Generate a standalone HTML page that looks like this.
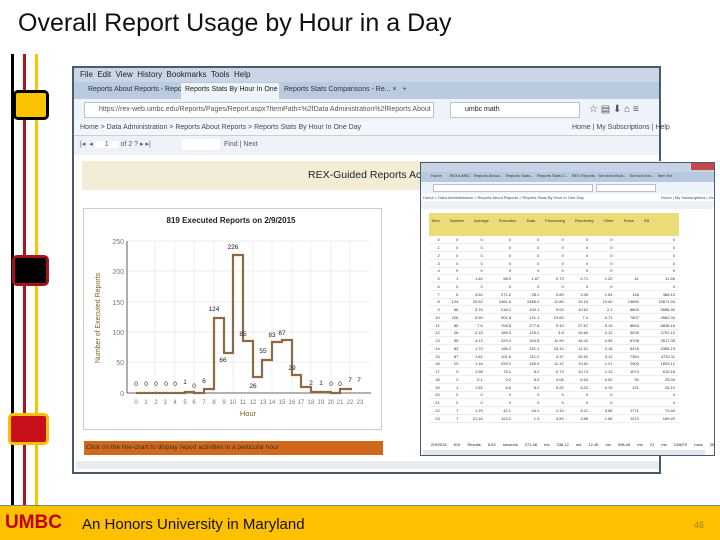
<!DOCTYPE html>
<html><head><meta charset="utf-8"><style>
*{margin:0;padding:0;box-sizing:border-box}
body{width:720px;height:540px;position:relative;overflow:hidden;background:#fff;font-family:"Liberation Sans",sans-serif}
.a{position:absolute}
.t{white-space:nowrap}
table{border-collapse:collapse;font-size:4px;color:#333}
td{height:7.75px;text-align:right;padding-right:4px;border-bottom:1px solid #eee}
</style></head><body>
<div class="a t" style="left:18px;top:9px;font-size:25px;color:#111">Overall Report Usage by Hour in a Day</div>
<div class="a" style="left:11px;top:54px;width:3px;height:452px;background:#000"></div>
<div class="a" style="left:23px;top:54px;width:3px;height:452px;background:#b01218"></div>
<div class="a" style="left:35px;top:54px;width:3px;height:452px;background:#f5c400"></div>
<div class="a" style="left:13px;top:90px;width:36px;height:30px;background:#fbc300;border:3px solid #000;border-radius:5px"></div>
<div class="a" style="left:12px;top:255px;width:37px;height:31px;background:#000;border:3px solid #a0141a;border-radius:5px"></div>
<div class="a" style="left:8px;top:413px;width:41px;height:32px;background:#c8101a;border:3px solid #f8c000;border-radius:5px"></div>
<div class="a" style="left:72px;top:66px;width:589px;height:408px;background:#fff;border:2px solid #4a5a70">
 <div class="a" style="left:0;top:0;width:585px;height:14px;background:#c9d6e6"></div>
 <div class="a t" style="left:6px;top:2px;font-size:8px;color:#222">File&nbsp; Edit&nbsp; View&nbsp; History&nbsp; Bookmarks&nbsp; Tools&nbsp; Help</div>
 <div class="a" style="left:0;top:14px;width:585px;height:17px;background:#b9cbe0"></div>
 <div class="a t" style="left:14px;top:18px;font-size:7px;color:#333">Reports About Reports - Repor... ×</div>
 <div class="a t" style="left:107px;top:15px;width:98px;height:16px;background:#eef3f9;font-size:7px;padding:3px 4px;color:#222;overflow:hidden">Reports Stats By Hour In One D... ×</div>
 <div class="a t" style="left:210px;top:18px;font-size:7px;color:#333">Reports Stats Comparisons - Re... ×  &nbsp; +</div>
 <div class="a" style="left:0;top:31px;width:585px;height:22px;background:#eef3f9"></div>
 <div class="a t" style="left:10px;top:34px;width:350px;height:16px;background:#fff;border:1px solid #b8c4d2;font-size:7px;padding:3px 14px;color:#555;overflow:hidden">https://rex-web.umbc.edu/Reports/Pages/Report.aspx?ItemPath=%2fData Administration%2fReports About Reports%2fReports</div>
 <div class="a t" style="left:376px;top:34px;width:130px;height:16px;background:#fff;border:1px solid #b8c4d2;font-size:7px;padding:3px 14px;color:#222">umbc math</div>
 <div class="a t" style="left:515px;top:36px;font-size:10px;color:#555">☆ ▤ ⬇ ⌂ ≡</div>
 <div class="a" style="left:0;top:53px;width:585px;height:14px;background:#f3f6fa"></div>
 <div class="a t" style="left:6px;top:56px;font-size:7px;color:#445">Home &gt; Data Administration &gt; Reports About Reports &gt; Reports Stats By Hour In One Day</div>
 <div class="a t" style="left:498px;top:56px;font-size:7px;color:#445">Home | My Subscriptions | Help</div>
 <div class="a" style="left:0;top:67px;width:585px;height:20px;background:#eef2f7;border-top:1px solid #ccd"></div>
 <div class="a t" style="left:6px;top:72px;font-size:7px;color:#557">|◂ &nbsp;◂ <span style="background:#fff;padding:0 10px">1</span> of 2 ? ▸ ▸|</div>
 <div class="a" style="left:108px;top:71px;width:38px;height:11px;background:#fff"></div>
 <div class="a t" style="left:150px;top:73px;font-size:7px;color:#557">Find | Next</div>
 <div class="a" style="left:8px;top:93px;width:580px;height:29px;background:#f3ecd6"></div>
 <div class="a t" style="left:234px;top:101px;font-size:10.5px;color:#222">REX-Guided Reports Activiti</div>
 <div class="a" style="left:9px;top:140px;width:299px;height:222px;border:1px solid #ccc;background:#fff"></div>
 <div class="a" style="left:10px;top:373px;width:299px;height:14px;background:#d0691e"></div>
 <div class="a t" style="left:12px;top:376px;font-size:6.5px;color:#333">Click on the line-chart to display report activities in a particular hour</div>
 <div class="a" style="left:2px;top:393px;width:583px;height:8px;background:#e8ecf0"></div>
</div>
<svg class="a" style="left:0;top:0" width="720" height="540">
 <text x="231" y="223" font-size="8" font-weight="bold" text-anchor="middle" fill="#222" font-family="Liberation Sans">819 Executed Reports on 2/9/2015</text>
 <g stroke="#ddd" stroke-width="0.6">
  <line x1="127" y1="241" x2="370" y2="241"/><line x1="127" y1="271" x2="370" y2="271"/><line x1="127" y1="302" x2="370" y2="302"/><line x1="127" y1="332" x2="370" y2="332"/><line x1="127" y1="362" x2="370" y2="362"/>
 </g>
 <g stroke="#e4e4e4" stroke-width="0.6">
  <line x1="155" y1="241" x2="155" y2="393"/><line x1="175" y1="241" x2="175" y2="393"/><line x1="194" y1="241" x2="194" y2="393"/><line x1="214" y1="241" x2="214" y2="393"/><line x1="233" y1="241" x2="233" y2="393"/><line x1="253" y1="241" x2="253" y2="393"/><line x1="272" y1="241" x2="272" y2="393"/><line x1="292" y1="241" x2="292" y2="393"/><line x1="311" y1="241" x2="311" y2="393"/><line x1="331" y1="241" x2="331" y2="393"/><line x1="350" y1="241" x2="350" y2="393"/>
 </g>
 <line x1="127" y1="241" x2="127" y2="393" stroke="#333" stroke-width="0.8"/>
 <line x1="127" y1="393" x2="371" y2="393" stroke="#333" stroke-width="0.8"/>
 <g font-size="7" fill="#777" text-anchor="end" font-family="Liberation Sans">
  <text x="124" y="244">250</text><text x="124" y="274">200</text><text x="124" y="305">150</text><text x="124" y="335">100</text><text x="124" y="365">50</text><text x="124" y="396">0</text>
 </g>
 <text transform="translate(100,318) rotate(-90)" font-size="7" fill="#7a6320" text-anchor="middle" font-family="Liberation Sans">Number of Executed Reports</text>
 <text x="248" y="416" font-size="7.5" fill="#7a6320" text-anchor="middle" font-family="Liberation Sans">Hour</text>
 <path fill="none" stroke="#8b6a45" stroke-width="2.2" d="M136 393 H185 V392 H194 V393 H204 V389 H214 V318 H224 V353 H233 V255 H243 V341 H253 V377 H262 V360 H272 V342 H282 V340 H292 V375 H301 V387 H311 V392 H321 V392 H331 V393 H340 V389 H352"/>
 <g font-size="6.5" fill="#222" text-anchor="middle" font-family="Liberation Sans">
  <text x="136" y="386">0</text><text x="146" y="386">0</text><text x="156" y="386">0</text><text x="166" y="386">0</text><text x="175" y="386">0</text><text x="185" y="384">1</text><text x="194" y="388">0</text><text x="204" y="383">6</text><text x="214" y="311">124</text><text x="223" y="362">66</text><text x="233" y="249">226</text><text x="243" y="336">85</text><text x="253" y="388">26</text><text x="263" y="353">55</text><text x="272" y="337">83</text><text x="282" y="335">87</text><text x="292" y="370">29</text><text x="311" y="385">2</text><text x="321" y="385">1</text><text x="331" y="386">0</text><text x="340" y="386">0</text><text x="350" y="382">7</text><text x="359" y="382">7</text>
 </g>
 <g font-size="6" fill="#777" text-anchor="middle" font-family="Liberation Sans">
  <text x="136" y="404">0</text><text x="146" y="404">1</text><text x="156" y="404">2</text><text x="165" y="404">3</text><text x="175" y="404">4</text><text x="185" y="404">5</text><text x="194" y="404">6</text><text x="204" y="404">7</text><text x="214" y="404">8</text><text x="224" y="404">9</text><text x="233" y="404">10</text><text x="243" y="404">11</text><text x="253" y="404">12</text><text x="263" y="404">13</text><text x="272" y="404">14</text><text x="282" y="404">15</text><text x="292" y="404">16</text><text x="301" y="404">17</text><text x="311" y="404">18</text><text x="321" y="404">19</text><text x="331" y="404">20</text><text x="340" y="404">21</text><text x="350" y="404">22</text><text x="360" y="404">23</text>
 </g>
</svg>
<div class="a" style="left:420px;top:162px;width:295px;height:294px;background:#fff;border:1px solid #4a5a70;overflow:hidden">
 <div class="a" style="left:0;top:0;width:295px;height:9px;background:#c5d3e4"></div>
 <div class="a" style="left:270px;top:0;width:25px;height:7px;background:#c8484a"></div>
 <div class="a" style="left:0;top:9px;width:295px;height:10px;background:#b7c9df"></div>
 <div class="a t" style="left:10px;top:10px;font-size:4px;color:#333">Home &nbsp; &nbsp; &nbsp; REX/UMBC &nbsp; Reports About... &nbsp; Reports Stats... &nbsp; Reports Stats C... &nbsp; REX Reports &nbsp; Services/Stud... &nbsp; Service Ann... &nbsp; Item Sel</div>
 <div class="a" style="left:0;top:19px;width:295px;height:12px;background:#eef3f9"></div>
 <div class="a" style="left:12px;top:21px;width:160px;height:8px;background:#fff;border:1px solid #bbc"></div>
 <div class="a" style="left:175px;top:21px;width:60px;height:8px;background:#fff;border:1px solid #bbc"></div>
 <div class="a t" style="left:2px;top:32px;font-size:4px;color:#445">Home &gt; Data Administration &gt; Reports About Reports &gt; Reports Stats By Hour In One Day</div>
 <div class="a t" style="left:240px;top:32px;font-size:4px;color:#445">Home | My Subscriptions | Help</div>
 <div class="a" style="left:0;top:38px;width:295px;height:8px;background:#eef2f7"></div>
 <div class="a" style="left:8px;top:50px;width:250px;height:23px;background:#ecdc78"></div>
 <div class="a t" style="left:10px;top:55px;font-size:4px;color:#333;word-spacing:9px">Time Number Average Execution Data Processing Rendering Other Rows KB</div>
 <div class="a" style="left:8px;top:73px;width:250px">
 <table style="width:250px">
 <tr><td>0</td><td>0</td><td>0</td><td>0</td><td>0</td><td>0</td><td>0</td><td>0</td><td></td><td>0</td></tr>
 <tr><td>1</td><td>0</td><td>0</td><td>0</td><td>0</td><td>0</td><td>0</td><td>0</td><td></td><td>0</td></tr>
 <tr><td>2</td><td>0</td><td>0</td><td>0</td><td>0</td><td>0</td><td>0</td><td>0</td><td></td><td>0</td></tr>
 <tr><td>3</td><td>0</td><td>0</td><td>0</td><td>0</td><td>0</td><td>0</td><td>0</td><td></td><td>0</td></tr>
 <tr><td>4</td><td>0</td><td>0</td><td>0</td><td>0</td><td>0</td><td>0</td><td>0</td><td></td><td>0</td></tr>
 <tr><td>5</td><td>1</td><td>1.60</td><td>98.0</td><td>1.67</td><td>0.73</td><td>0.71</td><td>1.20</td><td>41</td><td>11.56</td></tr>
 <tr><td>6</td><td>0</td><td>0</td><td>0</td><td>0</td><td>0</td><td>0</td><td>0</td><td></td><td>0</td></tr>
 <tr><td>7</td><td>6</td><td>4.50</td><td>271.2</td><td>28.1</td><td>0.80</td><td>3.40</td><td>1.54</td><td>148</td><td>386.12</td></tr>
 <tr><td>8</td><td>124</td><td>20.52</td><td>2461.5</td><td>2485.0</td><td>11.80</td><td>15.15</td><td>10.40</td><td>19650</td><td>15871.40</td></tr>
 <tr><td>9</td><td>66</td><td>3.76</td><td>218.2</td><td>100.1</td><td>9.00</td><td>10.62</td><td>2.1</td><td>6809</td><td>5686.30</td></tr>
 <tr><td>10</td><td>226</td><td>5.90</td><td>901.8</td><td>121.1</td><td>10.60</td><td>7.4</td><td>0.71</td><td>7507</td><td>4562.34</td></tr>
 <tr><td>11</td><td>85</td><td>7.6</td><td>708.8</td><td>277.6</td><td>9.10</td><td>27.67</td><td>5.19</td><td>8653</td><td>6835.16</td></tr>
 <tr><td>12</td><td>26</td><td>2.15</td><td>185.0</td><td>123.2</td><td>3.8</td><td>16.60</td><td>2.12</td><td>3028</td><td>2702.12</td></tr>
 <tr><td>13</td><td>55</td><td>4.12</td><td>229.4</td><td>164.8</td><td>11.90</td><td>16.41</td><td>4.35</td><td>6708</td><td>2617.35</td></tr>
 <tr><td>14</td><td>83</td><td>1.70</td><td>196.2</td><td>151.1</td><td>15.10</td><td>11.51</td><td>2.18</td><td>5478</td><td>4385.19</td></tr>
 <tr><td>15</td><td>87</td><td>1.62</td><td>101.6</td><td>211.2</td><td>4.37</td><td>26.52</td><td>3.12</td><td>7354</td><td>4732.11</td></tr>
 <tr><td>16</td><td>29</td><td>1.16</td><td>299.2</td><td>160.9</td><td>11.12</td><td>10.81</td><td>1.21</td><td>2009</td><td>1693.12</td></tr>
 <tr><td>17</td><td>9</td><td>1.98</td><td>75.1</td><td>8.2</td><td>0.73</td><td>10.74</td><td>1.13</td><td>1074</td><td>615.18</td></tr>
 <tr><td>18</td><td>2</td><td>0.1</td><td>9.2</td><td>8.0</td><td>0.06</td><td>6.64</td><td>0.02</td><td>30</td><td>25.00</td></tr>
 <tr><td>19</td><td>1</td><td>1.52</td><td>6.6</td><td>5.2</td><td>0.20</td><td>5.22</td><td>0.19</td><td>121</td><td>26.10</td></tr>
 <tr><td>20</td><td>0</td><td>0</td><td>0</td><td>0</td><td>0</td><td>0</td><td>0</td><td></td><td>0</td></tr>
 <tr><td>21</td><td>0</td><td>0</td><td>0</td><td>0</td><td>0</td><td>0</td><td>0</td><td></td><td>0</td></tr>
 <tr><td>22</td><td>7</td><td>1.29</td><td>42.1</td><td>44.1</td><td>1.10</td><td>4.21</td><td>3.56</td><td>1771</td><td>73.40</td></tr>
 <tr><td>23</td><td>7</td><td>21.16</td><td>123.2</td><td>1.3</td><td>3.50</td><td>3.56</td><td>1.56</td><td>1013</td><td>169.20</td></tr>
 </table></div>
 <div class="a t" style="left:10px;top:279px;font-size:4px;color:#222;word-spacing:6px">2/9/2015 819 Results 5.62 seconds 271.48 ms 236.12 ms 12.45 ms 598.45 ms 21 ms 126670 rows 35450 KB</div>
 <div class="a" style="left:2px;top:287px;width:282px;height:5px;background:#e4e8ee"></div>
</div>
<div class="a" style="left:0;top:505px;width:720px;height:35px;background:#ffc000;border-top:1px solid #6f8a80"></div>
<div class="a t" style="left:5px;top:512px;font-size:19px;font-weight:bold;color:#c00000">UMBC</div>
<div class="a t" style="left:82px;top:516px;font-size:15px;color:#111">An Honors University in Maryland</div>
<div class="a t" style="left:694px;top:520px;font-size:9px;color:#9a8030">46</div>
</body></html>
